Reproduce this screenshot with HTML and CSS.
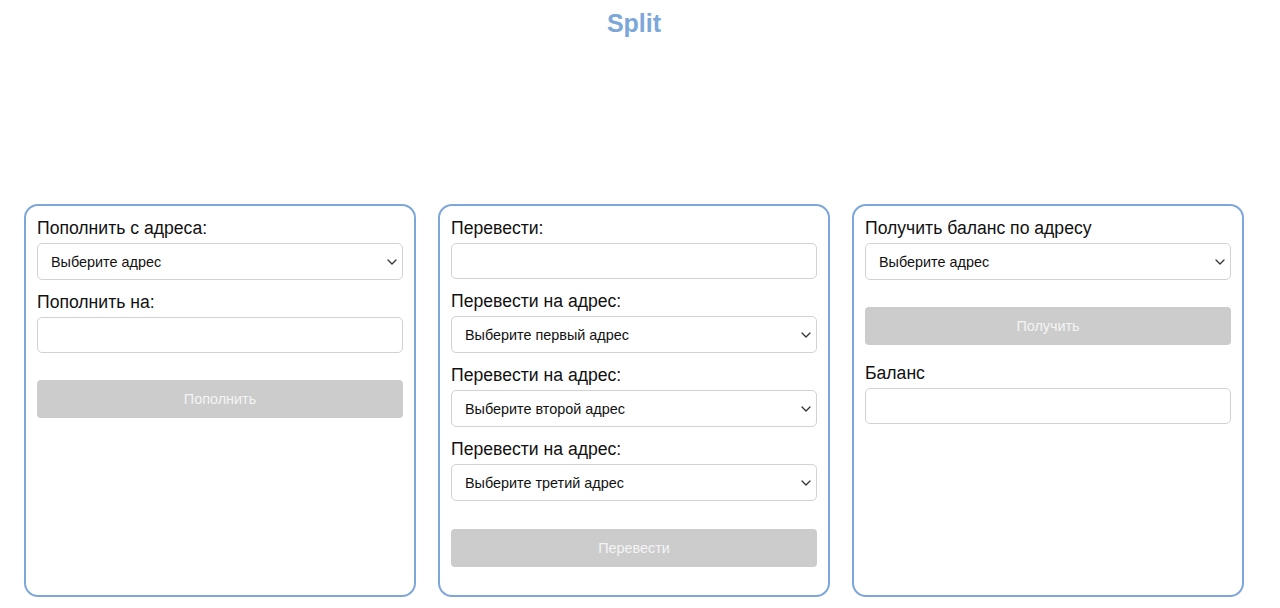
FILE: index.html
```html
<!DOCTYPE html>
<html lang="ru">
<head>
<meta charset="utf-8">
<title>Split</title>
<link rel="stylesheet" href="styles.css">
</head>
<body>
<div class="page">
<h1 class="title">Split</h1>
<main class="cards">
  <section class="card">
    <div class="field">
      <label class="label">Пополнить с адреса:</label>
      <select class="control select"><option>Выберите адрес</option></select>
    </div>
    <div class="field">
      <label class="label">Пополнить на:</label>
      <input class="control input" type="text">
    </div>
    <button class="btn" disabled>Пополнить</button>
  </section>
  <section class="card">
    <div class="field">
      <label class="label">Перевести:</label>
      <input class="control input" type="text">
    </div>
    <div class="field">
      <label class="label">Перевести на адрес:</label>
      <select class="control select"><option>Выберите первый адрес</option></select>
    </div>
    <div class="field">
      <label class="label">Перевести на адрес:</label>
      <select class="control select"><option>Выберите второй адрес</option></select>
    </div>
    <div class="field">
      <label class="label">Перевести на адрес:</label>
      <select class="control select"><option>Выберите третий адрес</option></select>
    </div>
    <button class="btn btn-last" disabled>Перевести</button>
  </section>
  <section class="card">
    <div class="field">
      <label class="label">Получить баланс по адресу</label>
      <select class="control select"><option>Выберите адрес</option></select>
    </div>
    <button class="btn" disabled>Получить</button>
    <div class="field">
      <label class="label">Баланс</label>
      <input class="control input" type="text">
    </div>
  </section>
</main>
</div>
</body>
</html>
```

FILE: styles.css
```css
* { box-sizing: border-box; }
html, body { margin: 0; padding: 0; background: #ffffff; }
body {
  font-family: "Liberation Sans", Arial, sans-serif;
  color: #111;
}
.page {
  width: 1268px;
}
.title {
  margin: 8px 0 0;
  font-size: 25px;
  line-height: 30px;
  font-weight: 700;
  text-align: center;
  color: #7ba7d9;
}
.cards {
  display: grid;
  grid-template-columns: repeat(3, 392px);
  column-gap: 22px;
  padding: 166px 0 0 24px;
  align-items: stretch;
}
.card {
  display: flex;
  flex-direction: column;
  border: 2px solid #7da7d8;
  border-radius: 14px;
  padding: 12px 11px 10px;
}
.field {
  display: flex;
  flex-direction: column;
  margin-bottom: 12px;
}
.label {
  font-size: 17.6px;
  line-height: 20px;
  margin-bottom: 5px;
  color: #111;
}
.control {
  width: 100%;
  height: 37px;
  border: 1px solid #d2d2d2;
  border-radius: 5px;
  background-color: #fff;
  font-family: inherit;
  font-size: 14.4px;
  color: #111;
  margin: 0;
}
.input { height: 36px; padding: 0 10px; }
.select {
  appearance: none;
  -webkit-appearance: none;
  padding: 0 24px 0 13px;
  background-image: url("data:image/svg+xml;utf8,<svg xmlns='http://www.w3.org/2000/svg' width='10' height='6' viewBox='0 0 10 6'><path d='M1 1l4 4 4-4' fill='none' stroke='%23333' stroke-width='1.3' stroke-linecap='round' stroke-linejoin='round'/></svg>");
  background-repeat: no-repeat;
  background-position: right 5px center;
  background-size: 10px 6px;
}
.btn {
  height: 38px;
  margin: 15px 0 18px;
  border: none;
  border-radius: 4px;
  background: #cccccc;
  color: #f4f4f4;
  font-family: inherit;
  font-size: 14.4px;
  width: 100%;
}
.btn-last {
  margin-top: 16px;
}
```
